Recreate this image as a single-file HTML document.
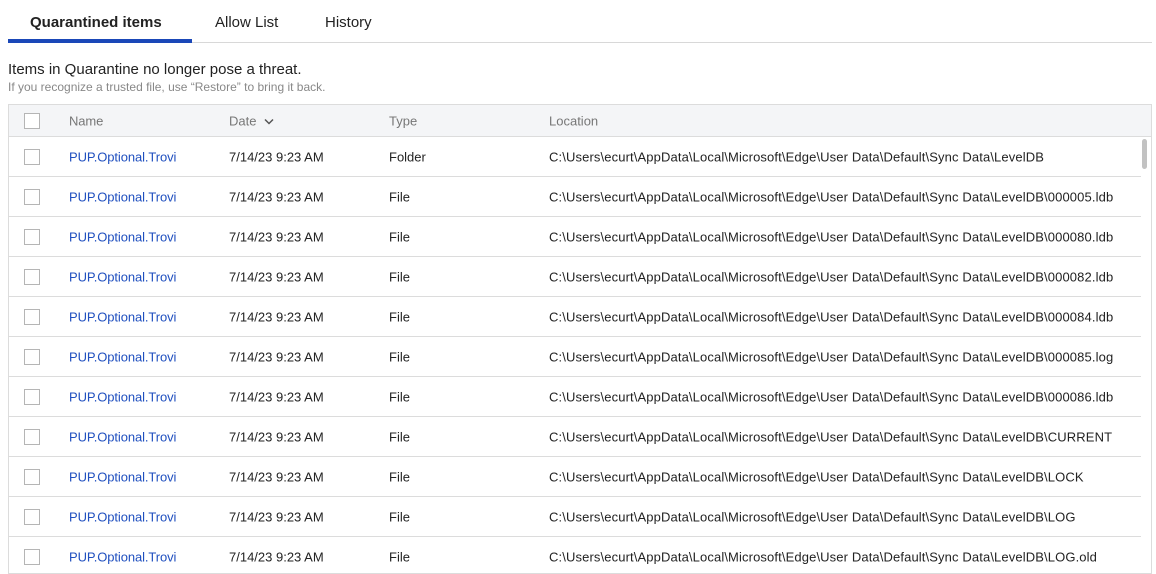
<!DOCTYPE html>
<html><head><style>
*{margin:0;padding:0;box-sizing:border-box}
body{width:1156px;height:566px;overflow:hidden;background:#fff;font-family:"Liberation Sans",sans-serif;color:#222;position:relative}
.tab{position:absolute;top:14px;font-size:15px;color:#222}
.hr{position:absolute;left:8px;top:42px;width:1144px;height:1px;background:#d8d8d8}
.ul{position:absolute;left:8px;top:39px;width:184px;height:4px;background:#1a47b8}
.t1{position:absolute;left:8px;top:61px;font-size:15px;color:#222}
.t2{position:absolute;left:8px;top:80px;font-size:12px;color:#888}
.tbl{position:absolute;left:8px;top:104px;width:1144px;height:470px;border:1px solid #dcdcdc;overflow:hidden}
.head{position:absolute;left:0;top:0;width:1142px;height:32px;background:#f4f5f7;border-bottom:1px solid #dcdcdc;font-size:13px;color:#777}
.row{position:absolute;left:0;width:1132px;height:40px;border-bottom:1px solid #dcdcdc;font-size:13px}
.c{position:absolute;top:50%;transform:translateY(-50%);white-space:nowrap}
.cb{position:absolute;left:15px;top:50%;margin-top:-8px;width:16px;height:16px;border:1px solid #b5b5b5;background:#fff}
.n{left:60px;color:#1f4fbf;letter-spacing:-0.1px}
.d{left:220px}.ty{left:380px}.lo{left:540px;letter-spacing:0.12px}
.sb{position:absolute;left:1133px;top:34px;width:5px;height:30px;background:#c2c2c2;border-radius:3px}
</style></head><body>
<div class="tab" style="left:30px;font-weight:bold">Quarantined items</div>
<div class="tab" style="left:215px">Allow List</div>
<div class="tab" style="left:325px">History</div>
<div class="hr"></div><div class="ul"></div>
<div class="t1">Items in Quarantine no longer pose a threat.</div>
<div class="t2">If you recognize a trusted file, use “Restore” to bring it back.</div>
<div class="tbl">
<div class="head"><div class="cb"></div><span class="c n" style="color:#777">Name</span><span class="c d">Date <svg width="12" height="8" viewBox="0 0 12 8" style="margin-left:3px"><path d="M2 2l4 4 4-4" fill="none" stroke="#555" stroke-width="1.5"/></svg></span><span class="c ty">Type</span><span class="c lo" style="letter-spacing:0">Location</span></div>
<div class="sb"></div>
<div class="row" style="top:32px"><div class="cb"></div><span class="c n">PUP.Optional.Trovi</span><span class="c d">7/14/23 9:23 AM</span><span class="c ty">Folder</span><span class="c lo">C:\Users\ecurt\AppData\Local\Microsoft\Edge\User Data\Default\Sync Data\LevelDB</span></div>
<div class="row" style="top:72px"><div class="cb"></div><span class="c n">PUP.Optional.Trovi</span><span class="c d">7/14/23 9:23 AM</span><span class="c ty">File</span><span class="c lo">C:\Users\ecurt\AppData\Local\Microsoft\Edge\User Data\Default\Sync Data\LevelDB\000005.ldb</span></div>
<div class="row" style="top:112px"><div class="cb"></div><span class="c n">PUP.Optional.Trovi</span><span class="c d">7/14/23 9:23 AM</span><span class="c ty">File</span><span class="c lo">C:\Users\ecurt\AppData\Local\Microsoft\Edge\User Data\Default\Sync Data\LevelDB\000080.ldb</span></div>
<div class="row" style="top:152px"><div class="cb"></div><span class="c n">PUP.Optional.Trovi</span><span class="c d">7/14/23 9:23 AM</span><span class="c ty">File</span><span class="c lo">C:\Users\ecurt\AppData\Local\Microsoft\Edge\User Data\Default\Sync Data\LevelDB\000082.ldb</span></div>
<div class="row" style="top:192px"><div class="cb"></div><span class="c n">PUP.Optional.Trovi</span><span class="c d">7/14/23 9:23 AM</span><span class="c ty">File</span><span class="c lo">C:\Users\ecurt\AppData\Local\Microsoft\Edge\User Data\Default\Sync Data\LevelDB\000084.ldb</span></div>
<div class="row" style="top:232px"><div class="cb"></div><span class="c n">PUP.Optional.Trovi</span><span class="c d">7/14/23 9:23 AM</span><span class="c ty">File</span><span class="c lo">C:\Users\ecurt\AppData\Local\Microsoft\Edge\User Data\Default\Sync Data\LevelDB\000085.log</span></div>
<div class="row" style="top:272px"><div class="cb"></div><span class="c n">PUP.Optional.Trovi</span><span class="c d">7/14/23 9:23 AM</span><span class="c ty">File</span><span class="c lo">C:\Users\ecurt\AppData\Local\Microsoft\Edge\User Data\Default\Sync Data\LevelDB\000086.ldb</span></div>
<div class="row" style="top:312px"><div class="cb"></div><span class="c n">PUP.Optional.Trovi</span><span class="c d">7/14/23 9:23 AM</span><span class="c ty">File</span><span class="c lo">C:\Users\ecurt\AppData\Local\Microsoft\Edge\User Data\Default\Sync Data\LevelDB\CURRENT</span></div>
<div class="row" style="top:352px"><div class="cb"></div><span class="c n">PUP.Optional.Trovi</span><span class="c d">7/14/23 9:23 AM</span><span class="c ty">File</span><span class="c lo">C:\Users\ecurt\AppData\Local\Microsoft\Edge\User Data\Default\Sync Data\LevelDB\LOCK</span></div>
<div class="row" style="top:392px"><div class="cb"></div><span class="c n">PUP.Optional.Trovi</span><span class="c d">7/14/23 9:23 AM</span><span class="c ty">File</span><span class="c lo">C:\Users\ecurt\AppData\Local\Microsoft\Edge\User Data\Default\Sync Data\LevelDB\LOG</span></div>
<div class="row" style="top:432px"><div class="cb"></div><span class="c n">PUP.Optional.Trovi</span><span class="c d">7/14/23 9:23 AM</span><span class="c ty">File</span><span class="c lo">C:\Users\ecurt\AppData\Local\Microsoft\Edge\User Data\Default\Sync Data\LevelDB\LOG.old</span></div>
</div>
</body></html>
